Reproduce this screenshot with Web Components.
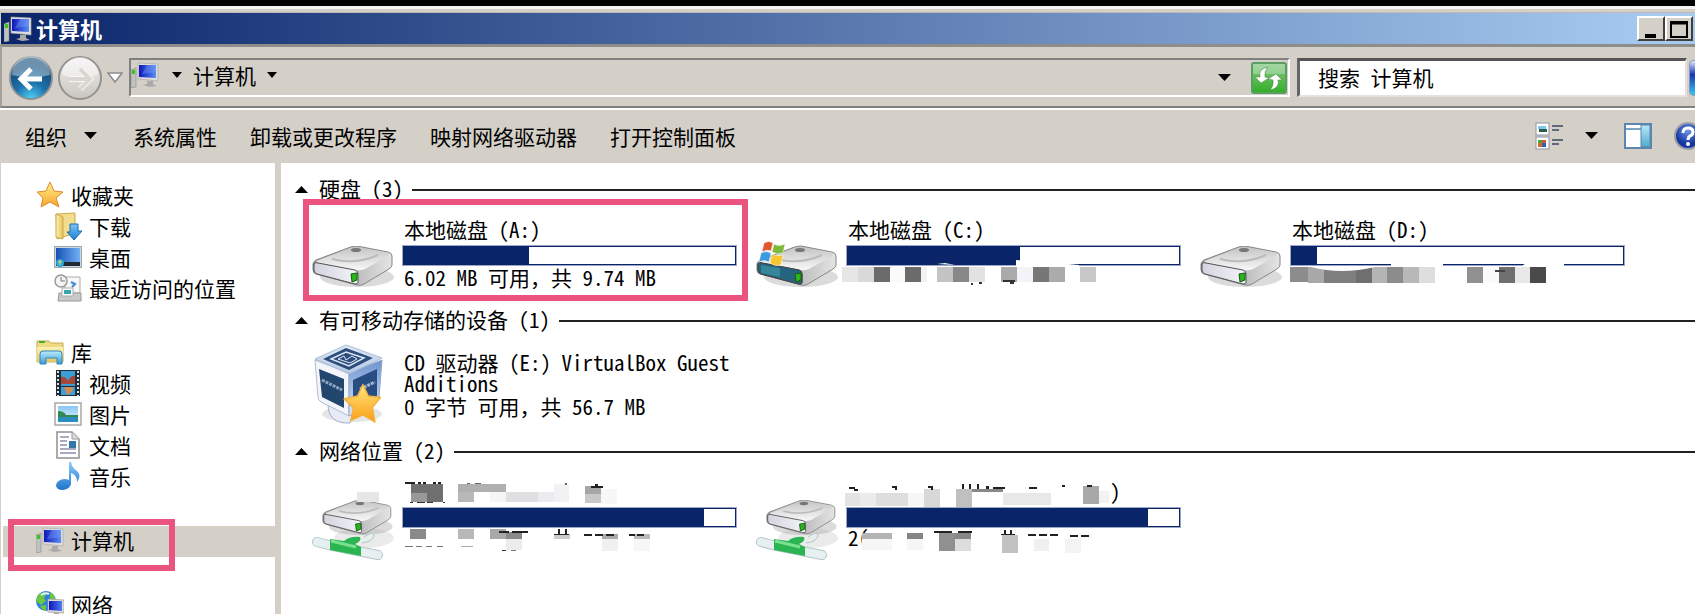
<!DOCTYPE html>
<html lang="zh-CN">
<head>
<meta charset="utf-8">
<title>计算机</title>
<style>
  html, body { margin: 0; height: 100%; overflow: hidden; }
  body {
    background: #d4d0c8; color: #000;
    font: 21px/24px "Noto Sans CJK SC", sans-serif;
    font-feature-settings: "hwid";
  }
  .full { font-feature-settings: normal; }
</style>
</head>
<body>
<explorer-window>
  <title-bar slot="title">计算机</title-bar>
  <address-bar slot="address" place="计算机" query="搜索 计算机"></address-bar>
  <command-bar slot="commands">
    <command-button menu>组织</command-button>
    <command-button>系统属性</command-button>
    <command-button>卸载或更改程序</command-button>
    <command-button>映射网络驱动器</command-button>
    <command-button>打开控制面板</command-button>
  </command-bar>
  <nav-pane slot="nav">
    <nav-group>
      <nav-item icon="star">收藏夹</nav-item>
      <nav-item icon="download" child>下载</nav-item>
      <nav-item icon="desktop" child>桌面</nav-item>
      <nav-item icon="recent" child>最近访问的位置</nav-item>
    </nav-group>
    <nav-group>
      <nav-item icon="library">库</nav-item>
      <nav-item icon="video" child>视频</nav-item>
      <nav-item icon="picture" child>图片</nav-item>
      <nav-item icon="document" child>文档</nav-item>
      <nav-item icon="music" child>音乐</nav-item>
    </nav-group>
    <nav-group><nav-item icon="computer" selected marked>计算机</nav-item></nav-group>
    <nav-group><nav-item icon="network">网络</nav-item></nav-group>
  </nav-pane>
  <drive-group label="硬盘 (3)">
    <drive-item icon="drive" used="378" marked>本地磁盘 (A:)<span slot="info">6.02 MB 可用<span class="full">，</span>共 9.74 MB</span></drive-item>
    <drive-item icon="windrive" used="520" mosaic="c">本地磁盘 (C:)</drive-item>
    <drive-item icon="drive" used="75" mosaic="d">本地磁盘 (D:)</drive-item>
  </drive-group>
  <drive-group label="有可移动存储的设备 (1)">
    <drive-item icon="vbox">CD 驱动器 (E:) VirtualBox Guest Additions<span slot="info">0 字节 可用<span class="full">，</span>共 56.7 MB</span></drive-item>
  </drive-group>
  <drive-group label="网络位置 (2)">
    <drive-item icon="netdrive" used="906" mosaic="n1"></drive-item>
    <drive-item icon="netdrive" used="906" mosaic="n2"></drive-item>
  </drive-group>
</explorer-window>

<script>
const define = (name, css, html, init) => customElements.define(name, class extends HTMLElement {
  constructor() { super(); this.attachShadow({ mode: 'open' }); }
  connectedCallback() {
    this.shadowRoot.innerHTML = `<style>:host,*{box-sizing:border-box}${css}</style>${typeof html === 'function' ? html(this) : html}`;
    if (init) init(this);
  }
});

/* ---------- icon library ---------- */
const stop = (o, c) => `<stop offset="${o}" stop-color="${c}"/>`;
const grad = (id, a, b, h) => `<linearGradient id="${id}" x2="${h ? 1 : 0}" y2="${h ? 0 : 1}">${stop(0, a)}${stop(1, b)}</linearGradient>`;
const driveBody = `<defs>${grad('top', '#c4c4c4', '#f8f8f8')}${grad('side', '#8d8d8d', '#e4e4e4', 1)}${grad('face', '#d4d4e0', '#f3f3fa', 1)}</defs>
  <ellipse cx="45" cy="31" rx="37" ry="10" fill="#999" opacity=".35"/>
  <path d="M1 18Q1 16 4 14L36 2Q40 0 45 0L76 6Q80 7 80 10V19Q80 21 77 23L52 38Q49 40 45 39L4 28Q1 27 1 24Z" fill="url(#side)" stroke="#858585"/>
  <path d="M4 15L38 2Q41 1 45 1L76 7Q78 8 76 10L53 23Q49 25 44 24L6 17Z" fill="url(#top)"/>
  <path d="M20 13Q44 19 66 9" fill="none" stroke="#bcbcbc" stroke-width="2"/><ellipse cx="44" cy="4" rx="5" ry="2" fill="#777"/>
  <path d="M2 18Q3 16 6 17L43 24Q46 25 46 28V37Q46 38 43 38L5 28Q2 27 2 24Z" fill="url(#face)" stroke="#555"/>`;
const led = `<path d="M39 28L45 27V34L40 36Z" fill="#29b51a" stroke="#145c10"/>`;
const monitor = `<defs>${grad('scr', '#1018b8', '#5b8cf5', 1)}</defs>
  <path d="M0 8L5 6V25L0 26Z" fill="#bfc3bf" stroke="#888" stroke-width=".6"/><rect x="1" y="8" width="3" height="4" fill="#35c51c"/>
  <path d="M7 1L27 2V19L7 17Z" fill="#dcdcdc" stroke="#aaa" stroke-width=".7"/><path d="M8 3L25 3V16L8 15Z" fill="url(#scr)"/><path d="M16 3L25 3V10L11 12Z" fill="#7fa7ff" opacity=".35"/>
  <path d="M16 19H22V22L26 24L18 25L12 23L16 22Z" fill="#aaa"/>`;
const bigStar = `<path d="M14 1L18 10L27 11L20 17L23 26L14 21L5 26L7 17L1 11L10 10Z" fill="url(#st)" stroke="#e08a2c" stroke-linejoin="round"/>`;
const icons = {
  computer: [28, 26, monitor],
  star: [28, 28, `<defs>${grad('st', '#fff08a', '#f9a52c')}</defs>${bigStar}`],
  download: [28, 28, `<defs>${grad('f', '#fdf0ae', '#e3c35c', 1)}${grad('a', '#7cc4f5', '#1c7fd0')}</defs>
    <path d="M2 2L21 1V21L3 27Z" fill="#f1dd8d" stroke="#cba94c"/><path d="M2 2L9 5V27L2 25Z" fill="url(#f)" stroke="#cba94c"/>
    <path d="M16 12H24V19H28L20 28L13 20H16Z" fill="url(#a)" stroke="#1d6db4"/>`],
  desktop: [28, 24, `<defs>${grad('d', '#1650b4', '#72b0f4', 1)}</defs><rect x=".5" y="1.500" width="27" height="21" fill="#cfd6e0" stroke="#9aa"/>
    <rect x="2" y="3" width="24" height="15" fill="url(#d)"/><rect x="2" y="17" width="24" height="4" fill="#222b33"/><circle cx="6" cy="18" r="4" fill="#29a4dc"/><path d="M4 17H8M6 15V20" stroke="#f5dd45"/>`],
  recent: [28, 28, `<path d="M11 3H26V19H11Z" fill="#f7f7f7" stroke="#aaa"/><path d="M5 19H27V27H4Z" fill="#c9c9c9" stroke="#999"/><path d="M8 14H19V22H8Z" fill="#fff" stroke="#aaa"/>
    <rect x="10" y="16" width="7" height="4" fill="#3ba7a9"/><path d="M17 8L21 10L18 13" fill="none" stroke="#3788d8" stroke-width="2"/>
    <circle cx="7" cy="7" r="6" fill="#f4f4f4" stroke="#999" stroke-width="1.500"/><path d="M7 3V7H11" fill="none" stroke="#777"/>`],
  library: [28, 26, `<defs>${grad('l', '#fdf2b4', '#e5c664')}${grad('lb', '#bdeafb', '#369bd6')}</defs>
    <path d="M1 2H13L15 4H27V23H1Z" fill="#efd983" stroke="#c9a957"/><rect x="3" y="2" width="6" height="2" fill="#43b02a"/><path d="M1 8H27V23H1Z" fill="url(#l)"/>
    <path d="M4 25V15Q4 12 7 12H23Q26 12 26 15V25H21V19H10V25Z" fill="url(#lb)" stroke="#2c86bd"/>`],
  video: [26, 28, `<rect x="1" y="1" width="24" height="26" fill="#222c33"/><path d="M3 2V27M23 2V27" stroke="#d7e4ec" stroke-width="2" stroke-dasharray="2 2"/>
    <rect x="6" y="2" width="14" height="15" fill="#3a9fd8"/><path d="M6 8Q11 7 13 12Q16 6 20 7V15H6Z" fill="#a54739"/><rect x="6" y="18" width="14" height="8" fill="#3aa0da"/><path d="M9 18H18L17 23L12 26Z" fill="#d38b55"/>`],
  picture: [28, 24, `<defs>${grad('p', '#87c5f3', '#e8f7ff')}</defs><rect x="1" y="1" width="26" height="22" fill="#fff" stroke="#a7a7a7" stroke-width="1.500"/><rect x="4" y="4" width="20" height="16" fill="url(#p)"/>
    <path d="M4 9Q10 9 12 13H24V16H4Z" fill="#2f8a52"/><path d="M4 15H24V20H4Z" fill="#2c8ec0"/>`],
  document: [24, 28, `<path d="M1 1H16L23 8V27H1Z" fill="#fff" stroke="#909090" stroke-width="1.500"/><path d="M16 1V8H23" fill="#ddd" stroke="#999"/>
    <path d="M4 6H13M4 10H11M4 14H11M4 18H20M4 22H20" stroke="#8a93ac" stroke-width="1.500"/><rect x="13" y="10" width="7" height="7" fill="#3477ab"/>`],
  music: [24, 28, `<defs>${grad('m', '#8bcbfb', '#1f75cb')}</defs><path d="M13 0H15Q16 6 21 9Q26 13 21 20Q21 13 15 11V22Q14 27 7 28Q0 28 0 23Q1 18 8 17Q11 17 13 18Z" fill="url(#m)"/>`],
  network: [28, 26, `<defs>${grad('scr', '#1018b8', '#4b7cf5', 1)}</defs><circle cx="10" cy="10" r="10" fill="#2d7fe0"/><path d="M2 4Q7 0 11 2L8 7L10 10L5 14L0 10ZM14 1Q20 5 19 10L14 8ZM4 15L10 14V20Q6 19 4 15Z" fill="#6dc83c"/><path d="M5 4Q9 1 13 3" stroke="#dff5ff" fill="none" stroke-width="2"/>
    <path d="M12 8L28 9V22L12 21Z" fill="#ddd" stroke="#999" stroke-width=".7"/><path d="M13 10L26 10V20L13 19Z" fill="url(#scr)"/><path d="M18 22H23V25H16Z" fill="#aaa"/>`],
  back: [44, 44, `<defs><radialGradient id="bg" cx=".5" cy="1" r=".8">${stop(0, '#4fd3fb')}${stop(.5, '#1c70a8')}${stop(1, '#174a78')}</radialGradient></defs>
    <circle cx="22" cy="22" r="21" fill="url(#bg)" stroke="#8a9097" stroke-width="2"/><path d="M3 19A19 19 0 0 1 41 19Q22 24 3 19Z" fill="#d8e8f2" opacity=".45"/>
    <path d="M33 23H13M22 13L12 23L22 33" fill="none" stroke="#fff" stroke-width="5"/>`],
  forward: [44, 44, `<defs>${grad('w', '#f0efec', '#c9c6c0')}</defs><circle cx="22" cy="22" r="21" fill="url(#w)" stroke="#929290" stroke-width="2"/><path d="M4 19A18 18 0 0 1 40 19Q22 24 4 19Z" fill="#fff" opacity=".45"/>
    <path d="M11 23H31M22 13L32 23L22 33" fill="none" stroke="#f8f8f6" stroke-width="6"/><path d="M11 23H31M22 13L32 23L22 33" fill="none" stroke="#dad7d2" stroke-width="4"/>`],
  history: [16, 12, `<path d="M1 1H15L8 10Z" fill="#fff" stroke="#8b8b90" stroke-width="1.500"/>`],
  down: [13, 7, `<path d="M0 0H13L6.500 7Z"/>`],
  small: [10, 6, `<path d="M0 0H10L5 6Z"/>`],
  up: [13, 7, `<path d="M0 7H13L6.500 0Z"/>`],
  refresh: [36, 32, `<defs>${grad('g', '#8fc98a', '#2fae24')}</defs><rect x="1" y="1" width="34" height="30" rx="2" fill="url(#g)" stroke="#5b9e62" stroke-width="2"/><rect x="2" y="2" width="32" height="10" fill="#c9ecd0" opacity=".4"/>
    <path d="M17 5Q7 7 9 15H4L10 21L18 16L14 15Q13 9 17 5Z" fill="#fff" stroke="#4d8f4d" stroke-width=".6"/><path d="M19 28Q29 26 27 18H31L25 12L17 17L22 18Q23 24 19 28Z" fill="#fff" stroke="#4d8f4d" stroke-width=".6"/>`],
  view: [28, 28, `<rect x="1" y="1" width="13" height="12" fill="#fff" stroke="#8b95a5"/><rect x="3" y="4" width="8" height="3" fill="#7fc4ea"/><rect x="4" y="7" width="8" height="3" fill="#276049"/>
    <rect x="1" y="15" width="13" height="12" fill="#fff" stroke="#8b95a5"/><rect x="3" y="18" width="4" height="4" fill="#43a82e"/><rect x="7" y="18" width="4" height="4" fill="#d3513a"/><rect x="3" y="21" width="4" height="4" fill="#cf6b2b"/><rect x="7" y="21" width="4" height="4" fill="#3262b5"/>
    <path d="M17 4H28M17 8H24M17 18H28M17 22H24" stroke="#5f6a7c" stroke-width="2"/>`],
  pane: [28, 26, `<defs>${grad('pp', '#b9e7f5', '#53a9ce')}</defs><rect x="1" y="1" width="26" height="24" fill="#fff" stroke="#5b86ad" stroke-width="2"/><path d="M2 6H18" stroke="#7ba3c8" stroke-width="2"/><rect x="17" y="2" width="9" height="22" fill="url(#pp)" stroke="#5b86ad"/>`],
  help: [28, 28, `<defs><radialGradient id="h" cx=".5" cy=".3">${stop(0, '#6f93e6')}${stop(1, '#1737a0')}</radialGradient></defs><circle cx="14" cy="14" r="13" fill="url(#h)" stroke="#9aa0a8" stroke-width="2"/>
    <path d="M9 11Q9 6 14 6Q19 6 19 10Q19 13 16 14Q14 15 14 18" fill="none" stroke="#fff" stroke-width="3"/><circle cx="14" cy="22" r="2" fill="#fff"/>`],
  min: [12, 18, `<rect x="0" y="14" width="11" height="4"/>`],
  max: [18, 18, `<path d="M1 2H17V17H1Z" fill="none" stroke="#000" stroke-width="2"/><path d="M0 3H18" stroke="#000" stroke-width="3"/>`],
  drive: [82, 42, driveBody + led],
  windrive: [82, 46, `<g transform="translate(0 5)">${driveBody}<path d="M2 18Q3 16 6 17L43 24Q46 25 46 28V37Q46 38 43 38L5 28Q2 27 2 24Z" fill="#24647f" stroke="#444"/><path d="M5 19L24 22V31L5 27Z" fill="#45a8b6" opacity=".5"/>${led}</g>
    <g stroke="#fff" stroke-width=".5"><path d="M8 2Q13 -1 17 2L15 10Q10 8 6 11Z" fill="#e2562d"/><path d="M18 3Q23 6 29 3L27 12Q21 14 16 11Z" fill="#7dba3a"/><path d="M5 12Q10 9 15 12L13 21Q8 18 3 21Z" fill="#3c9be0"/><path d="M16 13Q21 16 27 14L25 24Q19 26 14 22Z" fill="#f8c62f"/></g>`],
  netdrive: [82, 62, `<ellipse cx="52" cy="38" rx="30" ry="10" fill="#ddd" opacity=".6"/><g transform="translate(10 0) scale(.86)">${driveBody}${led}</g>
    <path d="M52 37Q62 30 62 36Q60 42 50 43" fill="#e6eded" stroke="#b6c6c8"/><path d="M5 42L21 46L66 55" fill="none" stroke="#b3c6c8" stroke-width="10" stroke-linecap="round"/><path d="M5 42L21 46L66 55" fill="none" stroke="#e6f0f0" stroke-width="8" stroke-linecap="round"/>
    <path d="M18 39L32 41Q38 36 48 37Q50 41 43 44L49 47V56L18 50Z" fill="#2bb552"/><path d="M19 41L44 47" stroke="#79e08e" stroke-width="3"/>`],
  vbox: [78, 82, `<defs>${grad('vr', '#6c93cf', '#dfe8f8')}${grad('vt', '#dfe9f6', '#b3c7e2')}${grad('st', '#ffe680', '#fb9e13')}</defs>
    <ellipse cx="38" cy="70" rx="30" ry="8" fill="#aaa" opacity=".3"/><path d="M14 60Q14 80 36 79L40 68Z" fill="#e6ebf5" stroke="#a3adc2"/>
    <path d="M1 16L35 29V72L7 58Q4 56 4 53Z" fill="#f4f5fa" stroke="#b4bccd"/><path d="M35 29L68 16L65 53Q64 57 60 59L35 72Z" fill="url(#vr)" stroke="#8ea6cd"/><path d="M1 15L32 1L68 14L35 30Z" fill="url(#vt)" stroke="#a8bbd8"/>
    <path d="M9 15L32 4L59 14L35 26Z" fill="#2c4d7c"/><path d="M17 15L32 8L50 14L35 22Z" fill="none" stroke="#dbe6f4" stroke-width="1.500"/><path d="M24 15L30 12L32 16L38 12L43 15L36 19Z" fill="none" stroke="#dbe6f4"/>
    <path d="M5 25L30 35V64L8 53Z" fill="#23466f"/><path d="M8 36L28 46" stroke="#8fa5c0" stroke-width="3" stroke-dasharray="3 1"/><path d="M39 36L63 25V52L39 61Z" fill="#274d83"/><path d="M46 45L61 38" stroke="#a5b8d2" stroke-width="3" stroke-dasharray="3 1"/>
    <g transform="translate(30 39) scale(1.350 1.450)"><path d="M14 1L18 9L27 10L21 17L23 27L14 22L5 26L7 17L0 11L10 9Z" fill="url(#st)" stroke="#f3b13c" stroke-linejoin="round"/></g>`],
};
define('ui-icon', ':host{display:inline-flex;flex:none}svg{display:block}', el => {
  const [w, h, body] = icons[el.getAttribute('name')];
  return `<svg width="${w}" height="${h}" viewBox="0 0 ${w} ${h}" aria-hidden="true">${body}</svg>`;
});

/* ---------- pixelated patches over private labels: x, y, width, height, shade ---------- */
const patches = {
  c: { cover: 'M169 61L200 63L232 66L232 68H169ZM90 65L98 64L108 66Z',
    cells: [[-5,68,16,15,'e6e6e6'],[11,68,16,15,'d9d9d9'],[27,68,16,15,'6b6b6b'],[43,68,15,15,'fafafa'],[58,68,16,15,'6b6b6b'],[74,68,6,15,'f2f2f2'],[90,68,16,15,'c4c4c4'],[106,68,16,15,'888888'],[122,68,16,15,'e2e2e2'],[154,68,16,15,'aaaaaa'],[170,68,16,15,'f3f3f8'],[186,68,16,15,'777777'],[202,68,16,15,'ababab'],[233,68,16,15,'c8c8c8'],[124,84,2,2,'333333'],[132,83,3,2,'333333'],[156,81,12,2,'333333'],[163,83,4,2,'333333']] },
  d: { cover: 'M236 63H273V68H230ZM100 65Q125 63 152 65V67H100Z',
    cells: [[-1,68,18,15,'8c8c8c'],[17,68,16,16,'a8a8a8'],[33,68,32,16,'7f7f7f'],[65,68,16,16,'6f6f6f'],[81,68,15,16,'b4b4b4'],[96,68,16,16,'8c8c8c'],[112,68,16,16,'b8b8b8'],[128,68,16,16,'dedede'],[176,68,16,16,'909090'],[192,70,16,14,'fafafa'],[208,68,16,16,'6f6f6f'],[224,68,15,16,'e8e8e8'],[239,68,16,16,'4a4a4a'],[204,71,10,2,'444444']],
    after: 'M20 68Q50 76 84 68V67H20Z' },
  n1: { cells: [[-46,31,22,10,'e6e6e6'],[8,23,32,9,'707070'],[8,32,16,9,'999999'],[24,32,16,9,'6f6f6f'],[55,23,48,8,'b0b0b0'],[55,31,16,10,'b8b8b8'],[87,31,16,10,'f6f6f6'],[103,31,32,10,'e0e0e2'],[135,31,16,10,'ececf0'],[151,23,15,18,'f2f2f4'],[182,25,16,8,'a6a6a6'],[182,33,16,9,'c8c8c8'],[198,28,16,15,'f7f7f7'],[2,21,10,2,'222222'],[15,21,3,2,'222222'],[20,21,3,2,'222222'],[30,21,3,2,'222222'],[35,21,3,2,'222222'],[64,22,3,1,'666666'],[72,22,6,1,'666666'],[162,22,2,2,'666666'],[188,25,12,2,'222222'],[192,23,3,2,'222222'],[7,41,3,1,'333333'],[14,41,8,1,'333333'],[24,41,6,1,'333333'],[40,41,2,1,'333333'],
      [7,68,16,10,'8a8a8a'],[55,68,16,10,'b8b8b8'],[87,68,16,10,'a8a8a8'],[103,71,16,7,'8a8a8a'],[103,78,16,11,'ececec'],[151,73,16,5,'cccccc'],[199,73,16,5,'aaaaaa'],[199,78,16,12,'f0f0f0'],[231,73,16,5,'bbbbbb'],[231,78,16,12,'f7f7f7'],[96,70,10,2,'222222'],[109,70,16,2,'222222'],[155,68,2,5,'222222'],[162,68,2,5,'222222'],[151,73,15,1,'222222'],[181,73,8,2,'222222'],[192,73,8,2,'222222'],[203,73,8,2,'222222'],[226,73,6,2,'222222'],[234,73,7,2,'222222'],[2,85,8,1,'777777'],[13,85,6,1,'777777'],[23,85,6,1,'777777'],[34,85,6,1,'777777'],[58,85,12,1,'aaaaaa'],[99,89,4,1,'333333'],[108,89,5,1,'777777']] },
  n2: { cells: [[-2,32,15,13,'e3e3e3'],[13,32,16,13,'ececec'],[29,32,32,13,'dedede'],[61,32,16,13,'f6f6f6'],[77,28,16,18,'d8d8d8'],[109,28,16,18,'c0c0c0'],[125,28,31,3,'888888'],[156,32,48,12,'e8e8e8'],[236,25,16,18,'a8a8a8'],[252,30,10,12,'f2f2f2'],[2,26,6,2,'222222'],[7,28,4,2,'222222'],[45,25,5,2,'222222'],[48,26,2,3,'222222'],[81,25,5,2,'222222'],[84,26,2,3,'222222'],[115,23,2,5,'222222'],[122,23,2,5,'222222'],[130,23,2,5,'222222'],[139,25,3,3,'222222'],[146,26,12,2,'222222'],[182,26,8,2,'222222'],[215,24,3,2,'222222'],[240,24,5,2,'222222'],
      [15,72,30,6,'b4b4b4'],[15,78,30,11,'f6f6f6'],[60,72,16,6,'858585'],[60,78,16,11,'f6f6f6'],[92,72,16,18,'909090'],[108,72,16,6,'888888'],[108,78,16,12,'dddddd'],[155,74,16,18,'c2c2c2'],[187,78,15,12,'f0f0f0'],[218,78,16,14,'f3f3f3'],[87,70,18,2,'222222'],[111,70,14,2,'222222'],[157,69,2,5,'222222'],[163,69,2,5,'222222'],[154,73,14,1,'222222'],[181,73,8,2,'222222'],[192,73,8,2,'222222'],[203,73,8,2,'222222'],[223,74,8,2,'222222'],[234,74,8,2,'222222']],
    labels: [[263, 39, ')'], [1, 85, '2(']] },
};
define('privacy-mosaic', ':host{position:absolute;inset:0;pointer-events:none}svg{display:block;overflow:visible;width:100%;height:100%}text{font-size:21px}', el => {
  const p = patches[el.getAttribute('name')];
  return `<svg>${p.cover ? `<path d="${p.cover}" fill="#fff"/>` : ''}
    ${(p.labels || []).map(([x, y, t]) => `<text x="${x}" y="${y}">${t}</text>`).join('')}
    ${p.cells.map(([x, y, w, h, c]) => `<rect x="${x}" y="${y}" width="${w}" height="${h}" fill="#${c}"/>`).join('')}
    ${p.after ? `<path d="${p.after}" fill="#fff"/>` : ''}</svg>`;
});

/* ---------- window frame ---------- */
define('explorer-window', `
  :host{display:flex;flex-direction:column;height:100vh;overflow:hidden;border-top:6px solid #000}
  .frame{height:7px;flex:none;border-top:3px solid #f4f3f0;border-bottom:1px solid #bdbab5}
  .split{display:flex;flex:1;min-height:0;border-left:1px solid #d4d0c8}
  aside{width:274px;flex:none;background:#fff;overflow:hidden}
  main{flex:1;min-width:0;margin-left:6px;background:#fff;padding:16px 0 0 13px;overflow:hidden}`,
  `<div class="frame"></div><slot name="title"></slot><slot name="address"></slot><slot name="commands"></slot>
   <div class="split"><aside><slot name="nav"></slot></aside><main><slot></slot></main></div>`);

define('title-bar', `
  :host{display:flex;align-items:center;height:31px;flex:none;margin-left:1px;padding:0 2px 0 3px;background:linear-gradient(90deg,#0a246a,#a6caf0 98%);color:#fff;font-weight:700;font-size:22px}
  h1{flex:1;margin:0;padding:0 0 2px 4px;font:inherit}
  button{width:28px;height:25px;padding:0;display:flex;align-items:center;justify-content:center;background:#d4d0c8;border:2px solid;border-color:#fff #404040 #404040 #fff}`,
  `<ui-icon name="computer"></ui-icon><h1><slot></slot></h1>
   <button aria-label="最小化"><ui-icon name="min"></ui-icon></button><button aria-label="最大化"><ui-icon name="max"></ui-icon></button>`);

define('address-bar', `
  :host{display:flex;align-items:center;height:64px;flex:none;padding:2px 0 0 7px;border-top:3px solid #8f8d8a;border-bottom:2px solid #808080;border-left:2px solid #a5a29d;box-shadow:0 2px 0 #fff;overflow:hidden}
  button{padding:0;border:0;background:none;display:flex;flex:none;cursor:default;font:inherit;color:inherit}
  .nav{display:flex;align-items:center;gap:5px;margin-right:6px}
  .box{flex:1;min-width:0;display:flex;align-items:center;height:39px;border:2px solid;border-color:#808080 #fff #fff #808080;padding-right:1px}
  .box span{margin:0 11px}
  .box span,.box>ui-icon{padding-bottom:6px}
  .box ui-icon[name=computer]{margin-right:13px}
  .fill{flex:1}.drop{margin-right:20px}
  input{width:390px;height:39px;flex:none;margin-left:7px;padding:0 18px 2px;border:2px solid;border-width:3px 2px 2px 3px;border-color:#555 #e6e3de #e6e3de #666;background:#fff;font:inherit;font-feature-settings:inherit;color:#000;outline:0;border-radius:0}
  .go{width:6px;height:36px;margin-left:2px;border-radius:5px 0 0 5px;background:linear-gradient(#dce8fa,#1736b4 40%,#35c8f4);border:1px solid #8796b8;border-right:0}`,
  el => `<div class="nav"><button aria-label="后退"><ui-icon name="back"></ui-icon></button><button aria-label="前进"><ui-icon name="forward"></ui-icon></button><button aria-label="历史"><ui-icon name="history"></ui-icon></button></div>
   <div class="box"><ui-icon name="computer"></ui-icon><ui-icon name="small"></ui-icon><span>${el.getAttribute('place')}</span><ui-icon name="small"></ui-icon><div class="fill"></div>
   <button class="drop" aria-label="以前的位置"><ui-icon name="down"></ui-icon></button><button aria-label="刷新"><ui-icon name="refresh"></ui-icon></button></div>
   <input type="text" aria-label="搜索" value="${el.getAttribute('query')}"><button class="go" aria-label="开始搜索"></button>`);

define('command-bar', `
  :host{display:flex;align-items:center;height:55px;flex:none;gap:33px;padding:0 0 0 25px;overflow:hidden}
  .tools{margin-left:auto;display:flex;align-items:center;gap:22px}
  .tools button{padding:0;border:0;background:none;display:flex}
  .tools .pane{margin-left:4px}.tools .help{margin-right:-7px}`,
  `<slot></slot><div class="tools"><button aria-label="更改视图"><ui-icon name="view"></ui-icon></button><button aria-label="更多选项"><ui-icon name="down"></ui-icon></button>
   <button class="pane" aria-label="预览窗格"><ui-icon name="pane"></ui-icon></button><button class="help" aria-label="帮助"><ui-icon name="help"></ui-icon></button></div>`);

define('command-button', `:host{display:block;flex:none}:host([menu]){padding-right:3px}
  button{display:flex;align-items:center;gap:17px;padding:0;border:0;background:none;font:inherit;font-feature-settings:inherit;color:inherit;white-space:nowrap}`,
  el => `<button><slot></slot>${el.hasAttribute('menu') ? '<ui-icon name="down"></ui-icon>' : ''}</button>`);

/* ---------- navigation pane ---------- */
define('nav-pane', ':host{display:block;padding-top:18px}nav{display:flex;flex-direction:column;gap:33px}', '<nav><slot></slot></nav>');
define('nav-group', ':host{display:block}', '<slot></slot>');
define('nav-item', `
  :host{display:block;position:relative;height:31px}
  a{display:flex;align-items:center;height:31px;margin-left:2px;padding:0 0 3px 32px;color:#000;text-decoration:none;white-space:nowrap}
  :host([child]) a{padding-left:50px}
  :host([selected]) a{background:#d4d0c8}
  .ico{width:30px;margin-right:6px;display:flex;justify-content:center}
  :host([marked])::after{content:"";position:absolute;left:7px;top:-7px;width:167px;height:52px;box-sizing:border-box;border:6px solid #ec5480}`,
  el => `<a href="#"><span class="ico"><ui-icon name="${el.getAttribute('icon')}"></ui-icon></span><slot></slot></a>`);

/* ---------- drives ---------- */
define('drive-group', `
  :host{display:block;margin-bottom:9px}
  h2{display:flex;align-items:center;height:20px;margin:0;padding-left:1px;font:inherit;white-space:nowrap}
  h2 span{margin:0 9px 0 11px;padding-bottom:3px}
  h2::after{content:"";flex:1;height:2px;background:#222;margin-top:2px}
  .grid{display:grid;grid-template-columns:repeat(auto-fill,444px);padding-left:9px}`,
  el => `<h2><ui-icon name="up"></ui-icon><span>${el.getAttribute('label')}</span></h2><div class="grid"><slot></slot></div>`);

define('drive-item', `
  :host{display:grid;grid-template-columns:80px 333px;column-gap:10px;position:relative;height:102px;padding-left:10px}
  .ico{align-self:start;display:flex;justify-content:center;padding-top:47px}
  .ico.windrive{padding-top:42px}.ico.netdrive{padding-top:39px}.ico.vbox{padding-top:14px}
  .body{position:relative;padding-top:20px}
  .vbox + .body{padding-top:22px}
  .name{min-height:21px;line-height:21px;padding-left:1px}
  .info{padding-left:1px}
  progress{display:block;appearance:none;width:333px;height:19px;margin-top:6px;border:1px solid #0a246a;outline:1px solid #0a246a66;background:#fff}
  progress::-webkit-progress-bar{background:#fff}
  progress::-webkit-progress-value{background:#0a246a}
  :host([marked])::after{content:"";position:absolute;inset:0 -1px 0 0;border:6px solid #ec5480}`,
  el => {
    const used = el.getAttribute('used'), mosaic = el.getAttribute('mosaic'), icon = el.getAttribute('icon');
    return `<div class="ico ${icon}"><ui-icon name="${icon}"></ui-icon></div><div class="body"><div class="name"><slot></slot></div>
      ${used ? `<progress max="1000" value="${used}" aria-label="已用空间"></progress>` : ''}<div class="info"><slot name="info"></slot></div>
      ${mosaic ? `<privacy-mosaic name="${mosaic}"></privacy-mosaic>` : ''}</div>`;
  });
</script>
</body>
</html>
